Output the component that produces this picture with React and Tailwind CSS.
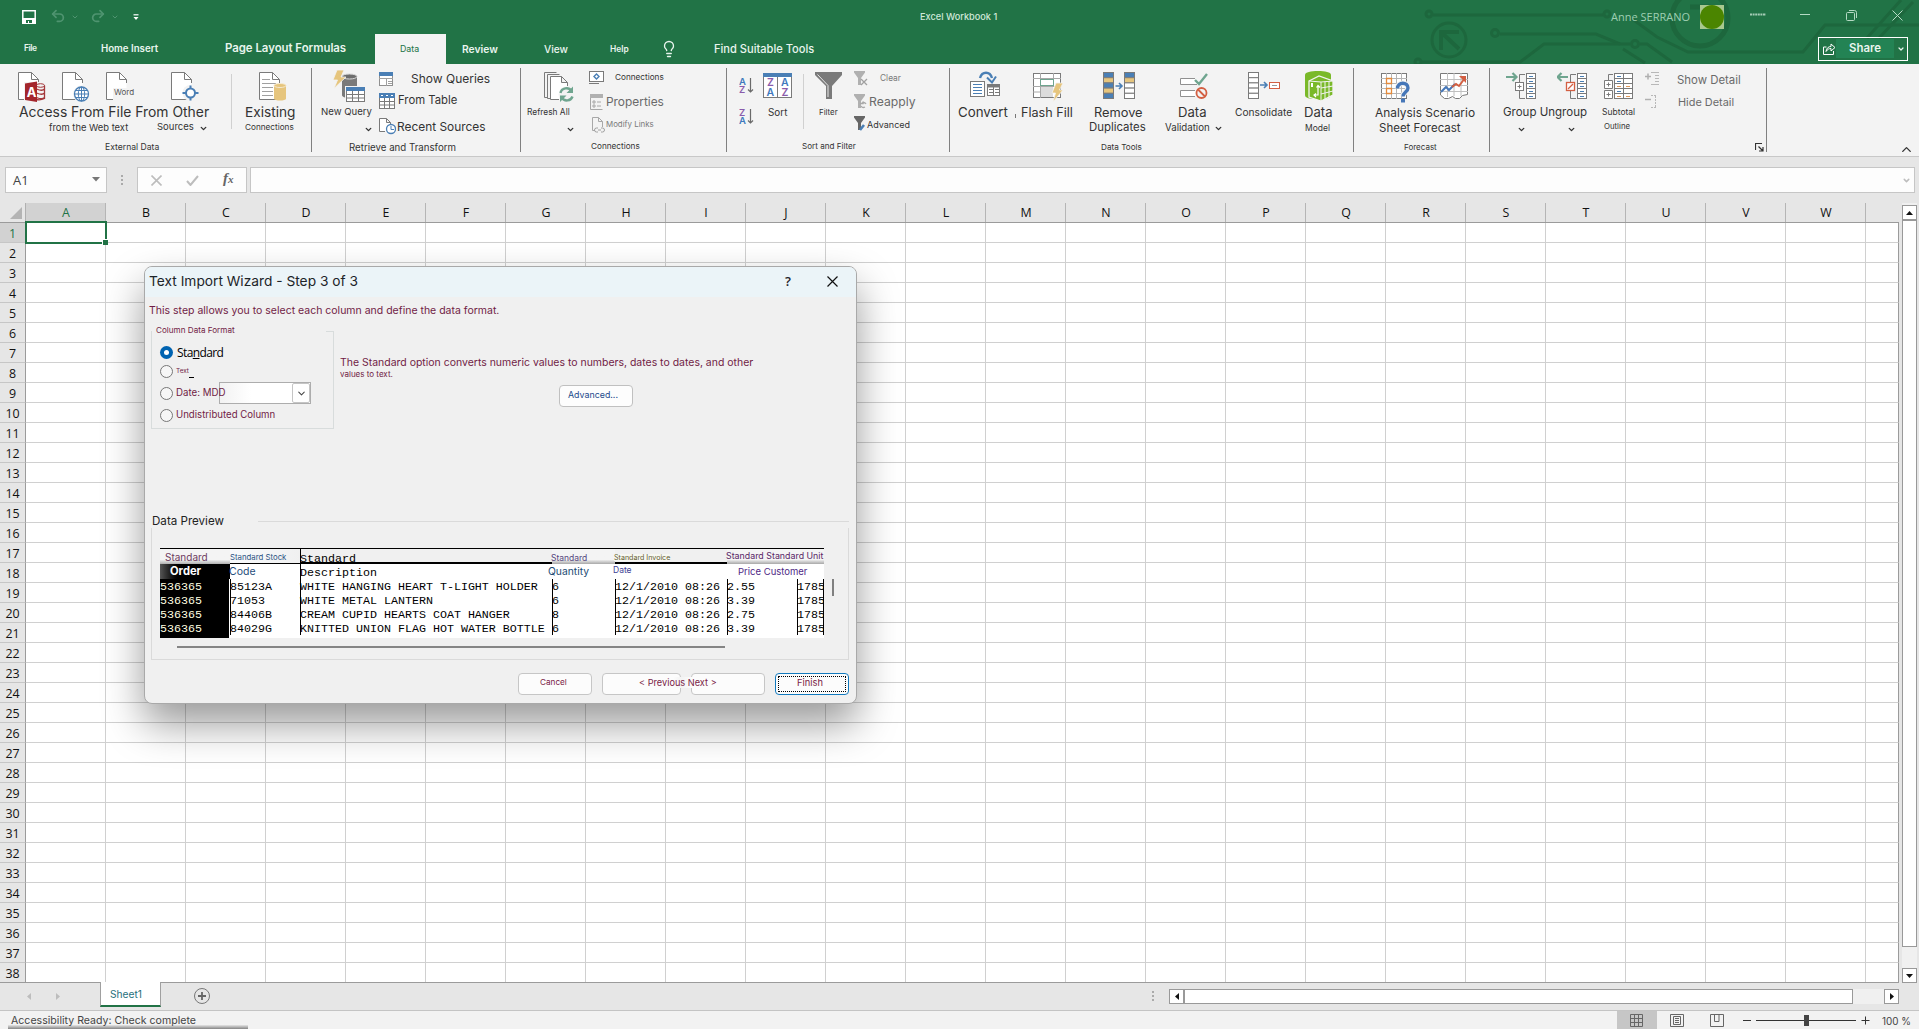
import { ChevronDown, ChevronUp, Lightbulb, Redo2, Undo2 } from 'lucide-react'

const COLUMNS = 'ABCDEFGHIJKLMNOPQRSTUVW'.split('')
const ROWS = Array.from({ length: 38 }, (_, i) => i + 1)

const GRAY = '#7a7a7a'
const BLUE = '#4a7fb5'
const YELLOW = '#e6c57d'
const RED = '#d35f42'
const GREEN = '#6fa58f'

function T({ className = '', children }) {
  return <span className={`shrink-0 whitespace-nowrap leading-none ${className}`}>{children}</span>
}

function Icon({ w, h, className = '', children }) {
  return (
    <svg width={w} height={h} viewBox={`0 0 ${w} ${h}`} fill="none" className={`shrink-0 ${className}`}>
      {children}
    </svg>
  )
}

function Doc({ children }) {
  return (
    <Icon w={30} h={32}>
      <path d="M21.5 8.5 14.5 1.5H1.5v27h20z" fill="#fff" />
      <path d="M18 28.5H1.5v-27h13l7 7V12M14.5 1.5v7h7" stroke={GRAY} />
      {children}
    </Icon>
  )
}

function AccessIcon() {
  return (
    <Doc>
      <rect x="7" y="11" width="22" height="19" fill="#f3f3f3" />
      <ellipse cx="23.500" cy="14.500" rx="4" ry="1.800" stroke="#a4373a" />
      <path d="M19.500 18q6 2.500 8 0M19.500 22q6 2.500 8 0M19.500 26.500q6 2.500 8 0M27.500 14.500v13q-4 2-8 1" stroke="#a4373a" strokeWidth="1.300" />
      <path d="M8 12.500 20 10.500v20.500L8 29z" fill="#a4262c" />
      <text x="9.800" y="25.500" fontSize="13" fontWeight="700" fontFamily="Inter, sans-serif" fill="#fff">A</text>
    </Doc>
  )
}

function WebIcon() {
  return (
    <Doc>
      <circle cx="20.500" cy="23" r="8.500" fill="#f3f3f3" />
      <circle cx="20.500" cy="23" r="7" stroke={BLUE} strokeWidth="1.300" fill="#fff" />
      <ellipse cx="20.500" cy="23" rx="3.200" ry="7" stroke={BLUE} />
      <path d="M20.500 16v14M13.500 23h14M14.500 19.500h12M14.500 26.500h12" stroke={BLUE} />
    </Doc>
  )
}

function OtherSourcesIcon() {
  return (
    <Doc>
      <circle cx="20.500" cy="22" r="8" fill="#f3f3f3" />
      <circle cx="20.500" cy="22" r="4.500" stroke={BLUE} strokeWidth="2" fill="#fff" />
      <path d="M20.500 14.500v3M20.500 26.500v3M12.500 22h3.500M25 22h3.500" stroke={BLUE} strokeWidth="2" />
    </Doc>
  )
}

function ExistingIcon() {
  return (
    <Doc>
      <path d="M4 8.500h8M4 12.500h14M4 16.500h11M4 20.500h11M4 24.500h11" stroke="#a0a0a0" />
      <path d="M16 14.500v13c0 1.500 3 2 6 2s6-.5 6-2v-13z" fill={YELLOW} />
      <ellipse cx="22" cy="14.500" rx="6" ry="2" fill={YELLOW} stroke="#f6ead0" />
    </Doc>
  )
}

function NewQueryIcon() {
  return (
    <Icon w={34} h={34}>
      <path d="M10 8v18c0 2 3 3 7.500 3S25 28 25 26V8z" fill={GRAY} />
      <ellipse cx="17.500" cy="7.500" rx="7.500" ry="2.500" fill="#6d6d6d" stroke="#d8d8d8" />
      <path d="M5 1h7L9 8h5L2 19.500 5.500 11H1z" fill={YELLOW} stroke="#f3f3f3" strokeWidth=".8" />
      <rect x="13" y="17" width="21" height="17" fill="#f3f3f3" />
      <rect x="14.500" y="18.500" width="18" height="14" fill="#fff" stroke={GRAY} />
      <path d="M14 18h19v4H14z" fill={BLUE} />
      <path d="M14 25.500h19M14 29h19M20.500 22v10M26.500 22v10" stroke={GRAY} />
    </Icon>
  )
}

function PaneIcon() {
  return (
    <Icon w={15} h={15}>
      <rect x=".5" y=".5" width="13" height="13" fill="#fff" stroke="#909090" />
      <path d="M0 0h14v4H0z" fill={BLUE} />
      <path d="M0 6.500h14M7.500 7v7M9 9.500h4M9 11.500h4" stroke="#a0a0a0" />
    </Icon>
  )
}

function TableIcon() {
  return (
    <Icon w={17} h={17}>
      <rect x=".5" y=".5" width="15" height="15" fill="#fff" stroke={GRAY} />
      <path d="M0 0h16v5H0z" fill={BLUE} />
      <path d="M2 2.500h2M7 2.500h2M12 2.500h2" stroke="#fff" />
      <path d="M0 8.500h16M0 12h16M5.500 5v11M10.500 5v11" stroke={GRAY} />
    </Icon>
  )
}

function RecentIcon() {
  return (
    <Icon w={17} h={17}>
      <path d="M6 13.500H.5V.5h7l4 4V6M7.500.5v4h4" stroke={GRAY} fill="#fff" />
      <circle cx="12" cy="11" r="4.500" fill="#fff" stroke={BLUE} strokeWidth="1.300" />
      <path d="M12 8v3.500h3" stroke={BLUE} />
    </Icon>
  )
}

function RefreshIcon() {
  return (
    <Icon w={31} h={32}>
      <path d="M4 26.500H1.500v-25h12M7 27.500H4.500v-24h12" stroke={GRAY} />
      <path d="M16 28.500H7.500v-23h11l6 6V15M18.500 5.500v6h6" stroke={GRAY} fill="#fff" />
      <circle cx="23.500" cy="23.500" r="8" fill="#f3f3f3" />
      <path d="M17.500 22c1-5 8-6.500 11-2M29.500 25.500c-1.500 4.500-8 5.500-11 1" stroke={GREEN} strokeWidth="2.400" />
      <path d="M30 15.500v6.500h-6.500zM17 31v-6.500h6.500z" fill={GREEN} />
    </Icon>
  )
}

function ConnectionsIcon() {
  return (
    <Icon w={16} h={14}>
      <rect x=".5" y=".5" width="14" height="10" fill="#fff" stroke={GRAY} />
      <path d="M0 12.500h10" stroke={GRAY} />
      <path d="m7.500 3 2.500 2.500L7.500 8 5 5.500z" stroke={BLUE} strokeWidth="1.400" />
    </Icon>
  )
}

function PropertiesIcon() {
  return (
    <Icon w={14} h={17}>
      <path d="M12.500 3V.5H.5v15h12" stroke="#a8a8a8" />
      <path d="M0 0h13v4H0z" fill="#b0b0b0" />
      <path d="M3 7h2v2H3zM3 11h2v2H3zM7 8h4M7 12h4" stroke="#a8a8a8" />
    </Icon>
  )
}

function ModifyLinksIcon() {
  return (
    <Icon w={13} h={17}>
      <path d="M3 13.500H.5V.5h6l4 4V10M6.500.5v4h4" stroke="#a8a8a8" />
      <path d="M6 11H4.500a1.500 1.500 0 0 0 0 4H6M9 11h1.500a1.500 1.500 0 0 1 0 4H9M6 13h3" stroke="#a0a0a0" />
    </Icon>
  )
}

function SortOrderIcon({ top, bottom, topColor, bottomColor }) {
  return (
    <Icon w={15} h={18}>
      <text x="0" y="8" fontSize="9.500" fontWeight="600" fontFamily="Inter, sans-serif" fill={topColor}>{top}</text>
      <text x="0" y="16" fontSize="9.500" fontWeight="600" fontFamily="Inter, sans-serif" fill={bottomColor}>{bottom}</text>
      <path d="M11.500 1v14M9 12.500l2.500 2.500 2.500-2.500" stroke="#6a6a6a" strokeWidth="1.200" />
    </Icon>
  )
}

function SortIcon() {
  return (
    <Icon w={30} h={26}>
      <rect x=".5" y=".5" width="28" height="24" fill="#fff" stroke={GRAY} />
      <path d="M0 0h29v4H0z" fill={BLUE} />
      <path d="M14.500 4v20" stroke={GRAY} />
      <g fontSize="10.500" fontWeight="600" fontFamily="Inter, sans-serif">
        <text x="4" y="13" fill="#8a5bab">Z</text>
        <text x="3.500" y="23" fill="#3f79bd">A</text>
        <text x="18" y="13" fill="#3f79bd">A</text>
        <text x="18.500" y="23" fill="#8a5bab">Z</text>
      </g>
    </Icon>
  )
}

function FilterIcon() {
  return (
    <Icon w={28} h={28}>
      <path d="M0 0h27v3L17 14v13h-6V14L0 3z" fill={GRAY} />
      <path d="M2.500 2.500 13 13.500V25" stroke="#e8e8e8" />
    </Icon>
  )
}

function SmallFilterIcon({ color, children }) {
  return (
    <Icon w={15} h={16}>
      <path d="M0 0h11v1.500L7 7v7H4V7L0 1.500z" fill={color} />
      {children}
    </Icon>
  )
}

function ConvertIcon() {
  return (
    <Icon w={31} h={28}>
      <path d="M10 7C12 0 20 0 22 7" stroke={BLUE} strokeWidth="2.400" />
      <path d="M17 6.500l5 5 4-6" stroke={BLUE} strokeWidth="2" />
      <rect x=".5" y="10.500" width="14" height="15" fill="#fff" stroke={GRAY} />
      <path d="M3 13.500h9M3 16.500h9M3 19.500h9M3 22.500h9" stroke={BLUE} />
      <rect x="17.500" y="13.500" width="12" height="11" fill="#fff" stroke={GRAY} />
      <path d="M17 13h13v3.500H17z" fill={GRAY} />
      <path d="M19 18.500h4M25 18.500h4M19 21.500h4M25 21.500h4M23.500 16v8" stroke={GRAY} />
    </Icon>
  )
}

function FlashFillIcon() {
  return (
    <Icon w={31} h={30}>
      <rect x=".5" y=".5" width="27" height="24" fill="#fff" stroke={GRAY} />
      <path d="M0 5.500h28M0 13.500h28M0 19h28M7.500 0v25M20.500 0v6" stroke="#a8a8a8" />
      <path d="M8 14h12v10H8z" fill="#dcdcdc" />
      <rect x="7.500" y="6.500" width="13" height="6" fill="#fff" stroke={GREEN} />
      <path d="M23 10h7l-3.500 7H30L20 29l2.500-9H19z" fill={YELLOW} stroke="#f3f3f3" strokeWidth=".8" />
    </Icon>
  )
}

function BandColumn({ x, bands }) {
  return bands.map((fill, i) => (
    <rect key={i} x={x + 0.5} y={0.5 + i * 5.2} width="10" height="5.200" fill={fill} stroke={GRAY} />
  ))
}

function RemoveDuplicatesIcon() {
  return (
    <Icon w={33} h={28}>
      <BandColumn x={0} bands={[BLUE, YELLOW, BLUE, YELLOW, BLUE]} />
      <path d="M12.500 14h6M16 11l3 3-3 3" stroke={BLUE} strokeWidth="1.600" />
      <BandColumn x={21} bands={[BLUE, YELLOW, '#fff', '#fff', '#fff']} />
    </Icon>
  )
}

function ValidationIcon() {
  return (
    <Icon w={28} h={27}>
      <path d="M15 5.500H.5v6H17M15 17.500H.5v6H15" stroke="#909090" fill="#fff" />
      <path d="m15 7 4 4L27 1" stroke={GREEN} strokeWidth="2.400" />
      <circle cx="21.500" cy="20" r="5" stroke={RED} strokeWidth="1.800" fill="#f3f3f3" />
      <path d="m18 16.500 7 7" stroke={RED} strokeWidth="1.800" />
    </Icon>
  )
}

function ConsolidateIcon() {
  return (
    <Icon w={33} h={28}>
      <BandColumn x={0} bands={['#fff', '#fff', '#fff', '#fff', '#fff']} />
      <path d="M12 13h6.500M16 10l3 3-3 3" stroke={BLUE} strokeWidth="1.600" />
      <rect x="21.500" y="10.500" width="10" height="6" fill="#fff" stroke={RED} />
      <path d="M24 13.500h5" stroke="#999" />
    </Icon>
  )
}

function DataModelIcon() {
  return (
    <Icon w={30} h={31}>
      <path d="M0 4C0 1 6 0 13 0s13 1 13 4v20c0 3-4 4-13 4S0 27 0 24z" fill="#7ab929" />
      <path d="m4 10 10-5 14 5v14l-12 6-12-4z" fill="#7ab929" stroke="#f3f3f3" strokeWidth="1.300" />
      <path d="M16 30V11L4 10M16 11l12-1M16 17l12-2M16 23l12-3M20 10.500V28M24 10v16" stroke="#f3f3f3" />
      <path d="M10 24h3v-9M11.500 16.500l1.500-2 2 2M11 22.500 9 24l2 2" stroke="#fff" strokeWidth="1.200" />
      <path d="M7 12v4" stroke="#fff" strokeWidth="2" />
    </Icon>
  )
}

function WhatIfIcon() {
  return (
    <Icon w={30} h={31}>
      <rect x=".5" y=".5" width="25" height="25" fill="#fff" stroke={GRAY} />
      <path d="M0 5.500h26M0 10.500h26M0 15.500h26M0 20.500h26M5.500 0v26M10.500 0v26M15.500 0v26M20.500 0v26" stroke="#b5b5b5" />
      <path d="M5.500 5.500h5v5h-5zM5.500 15.500h5v5h-5z" fill="#fff" stroke="#e58a3a" strokeWidth="1.300" />
      {/* question mark: light outline under a thick blue hook and dot */}
      <path d="M16.500 15.500c0-7 10.500-7 10.500-.5 0 4-5 4-5 8.500" stroke="#f3f3f3" strokeWidth="5.500" />
      <path d="M16.500 15.500c0-7 10.500-7 10.500-.5 0 4-5 4-5 8.500" stroke="#4677b8" strokeWidth="3.400" />
      <path d="M20 25.500h4v4h-4z" fill="#4677b8" />
    </Icon>
  )
}

function ForecastIcon() {
  return (
    <Icon w={29} h={27}>
      <path d="M.5.5h27v21l-5 1-3 3h-4l-3-2-4 2h-4L.5 22z" fill="#fff" stroke={GRAY} />
      <path d="M0 6.500h28M0 12.500h28M0 18.500h28M7.500 0v24M14 0v23M21 0v23" stroke="#c0c0c0" />
      <path d="m1 19 5-5 3 3 6-6" stroke="#4677b8" strokeWidth="2" />
      <path d="m12 14 4-3 3 2 6-8" stroke={RED} strokeWidth="2" />
      <path d="M19 3h7v7z" fill={RED} />
    </Icon>
  )
}

function OutlineList({ x }) {
  return (
    <>
      <rect x={x + 0.5} y="1.500" width="9" height="25" fill="#fff" stroke={GRAY} />
      {[4, 9, 14, 19, 24].map((y) => (
        <path key={y} d={`M${x + 3} ${y + 0.5}h4`} stroke={BLUE} />
      ))}
      {[6, 11, 16, 21].map((y) => (
        <path key={y} d={`M${x} ${y + 0.5}h10`} stroke={GRAY} />
      ))}
    </>
  )
}

function GroupIcon() {
  return (
    <Icon w={31} h={28}>
      <path d="M0 5h9M6.500 1l4 4-4 4" stroke={GREEN} strokeWidth="2.200" />
      <path d="M19 2.500h-5.500V10M13.500 19v7.500H19" stroke={GRAY} />
      <rect x="9.500" y="10.500" width="8" height="8" fill="#fff" stroke={GRAY} />
      <path d="M11.500 14.500h4M13.500 12.500v4" stroke={GRAY} />
      <OutlineList x={20} />
    </Icon>
  )
}

function UngroupIcon() {
  return (
    <Icon w={31} h={28}>
      <path d="M11 5H2M4.500 1l-4 4 4 4" stroke={GREEN} strokeWidth="2.200" />
      <path d="M19 2.500h-5.500V10M13.500 19v7.500H19" stroke={GRAY} />
      <rect x="9.500" y="10.500" width="8" height="8" fill="#fff" stroke={RED} strokeWidth="1.300" />
      <path d="m11 17 5-5" stroke={RED} strokeWidth="1.300" />
      <OutlineList x={20} />
    </Icon>
  )
}

function SubtotalIcon() {
  return (
    <Icon w={30} h={28}>
      <path d="M9 2.500H4.500V8" stroke={GRAY} />
      <path d="M.5 8.500h8v8h-8zM.5 18.500h8v8h-8z" fill="#fff" stroke={GRAY} />
      <path d="M2.500 12.500h4M4.500 10.500v4M2.500 22.500h4M4.500 20.500v4" stroke={GRAY} />
      <rect x="10.500" y="1.500" width="18" height="25" fill="#fff" stroke={GRAY} />
      <path d="M10 6.500h19M10 11.500h19M10 16.500h19M10 21.500h19M19.500 1v26" stroke={GRAY} />
      <path d="M13 4.500h4M13 9.500h4M13 19.500h4" stroke={BLUE} />
      <path d="M13 14.500h4M22 14.500h4M13 24.500h4M22 24.500h4" stroke="#e0975a" />
    </Icon>
  )
}

function DetailIcon({ plus }) {
  return (
    <Icon w={15} h={14}>
      <path d={plus ? 'M0 4.500h6M3 1.500v6' : 'M0 4.500h6'} stroke="#b0b0b0" strokeWidth="1.500" />
      {plus ? (
        <path d="M6 .5h8M10 3.500h4M10 6.500h4M10 9.500h4M6 12.500h8" stroke="#b8b8b8" />
      ) : (
        <path d="M6 .5h5M10.500 1v12M6 12.500h5" stroke="#b8b8b8" strokeDasharray="2 1" />
      )}
    </Icon>
  )
}

function Caret({ className = '' }) {
  return <ChevronDown size={9} strokeWidth={3.600} className={`shrink-0 text-[#333] ${className}`} />
}

function Circuit() {
  return (
    <svg width="520" height="64" viewBox="0 0 520 64" fill="none" className="absolute right-0 top-0" stroke="#1d673d" strokeWidth="3">
      <circle cx="30" cy="14" r="3" />
      <path d="M34 15h170" />
      <circle cx="208" cy="14" r="3" />
      <circle cx="50" cy="40" r="17" />
      <path d="M42 50V32h18M43 33l17 16" strokeWidth="4" />
      <circle cx="96" cy="33" r="3.500" />
      <path d="M101 34h96l24 10" />
      <circle cx="19" cy="62" r="3" />
      <path d="M23 62h98l24-18h86M241 44h7l25 18" />
      <circle cx="236" cy="44" r="3.500" />
      <path d="m224 49 22 14M232 18l26 19 31 15h115l22-27h94" />
      <circle cx="301" cy="18" r="28" strokeWidth="5" />
      <path d="M291 7h18v4" strokeWidth="5" />
      <path d="m468 38 34-38M480 38 514 2" />
    </svg>
  )
}

function TitleBar() {
  return (
    <header className="relative h-16 bg-[#217346] text-white">
      <Circuit />
      <div className="relative flex h-[34px] items-start">
        <Icon w={15} h={15} className="ml-[22px] mt-[10px]">
          <path d="M.8.8h12.400v12.400H.8z" stroke="#fff" strokeWidth="1.500" />
          <path d="M0 8h14v6H0z" fill="#fff" />
          <path d="M4 10h6v3H7v-2H6v2H4z" fill="#217346" />
        </Icon>
        <Undo2 size={16} strokeWidth={2.600} className="ml-[13px] mt-[8px] text-[#4f9470]" />
        <ChevronDown size={8} strokeWidth={3} className="ml-[5px] mt-[13px] text-[#4f9470]" />
        <Redo2 size={16} strokeWidth={2.600} className="ml-[11px] mt-[8px] text-[#4f9470]" />
        <ChevronDown size={8} strokeWidth={3} className="ml-[5px] mt-[13px] text-[#4f9470]" />
        <Icon w={7} h={7} className="ml-[14px] mt-[14px]">
          <path d="M.5.8h5" stroke="#fff" strokeWidth="1.200" />
          <path d="M.5 3h5L3 6z" fill="#fff" />
        </Icon>
        <T className="ml-[780px] mt-[12px] w-[77px] text-[9.2px] font-medium text-[#cfe8d9]">Excel Workbook 1</T>
        <T className="ml-[614px] mt-[11px] w-[79px] font-['Open_Sans'] text-[11px] text-[#9ecfb2]">Anne SERRANO</T>
        <span className="ml-[10px] mt-[5px] size-6 shrink-0 bg-[#a9c88f]">
          <span className="block size-6 rounded-full bg-[#4b8500]" />
        </span>
        <Icon w={16} h={4} className="ml-[26px] mt-[13px]">
          <path d="M0 1.500h16" stroke="#a5ccb5" strokeWidth="2" strokeDasharray="2 .6" />
        </Icon>
        <Icon w={10} h={2} className="ml-[34px] mt-[14px]">
          <path d="M0 .5h10" stroke="#b5dac4" />
        </Icon>
        <Icon w={11} h={11} className="ml-[36px] mt-[10px]">
          <path d="M.5 3.500q0-1 1-1h6q1 0 1 1v6q0 1-1 1h-6q-1 0-1-1zM3 .5h5.500q2 0 2 2V8" stroke="#b5dac4" />
        </Icon>
        <Icon w={11} h={11} className="ml-[35px] mt-[10px]">
          <path d="m.5.5 10 10M10.500.5l-10 10" stroke="#b5dac4" />
        </Icon>
      </div>
      <nav className="relative flex h-[30px] items-center font-semibold text-[#e9f5ee]">
        <T className="-mt-px ml-6 w-[13px] text-[8.5px] tracking-[-0.5px]">File</T>
        <T className="-mt-px ml-16 w-[57px] text-[9.7px]">Home Insert</T>
        <T className="ml-[67px] w-[122px] text-[11.4px] tracking-[-0.02px]">Page Layout Formulas</T>
        <div className="ml-[28px] flex h-[30px] w-[71px] items-center bg-[#f3f3f3] pl-[25px]">
          <T className="text-[8.8px] font-normal text-[#217346]">Data</T>
        </div>
        <T className="ml-[16px] w-[36px] text-[10.3px]">Review</T>
        <T className="ml-[46px] w-6 text-[10.2px] font-medium">View</T>
        <T className="ml-[42px] w-[19px] text-[8.4px]">Help</T>
        <Lightbulb size={18} strokeWidth={1.800} className="ml-[31px] -mt-px" />
        <T className="ml-[36px] mt-[2px] w-[102px] text-[11.1px] font-medium">Find Suitable Tools</T>
        <div className="ml-[1002px] flex h-6 w-[90px] items-center border border-white">
          <Icon w={13} h={12} className="ml-[4px]">
            <path d="M3.500 4H.5v7.500h10V8M3 8.500C3.500 5 5.500 3.500 8 3.500V1l4 3.500L8 8V5.500c-2 0-3.500.8-5 3z" stroke="#fff" />
          </Icon>
          <span className="flex h-[19px] w-[58px] items-center bg-[#238354] pl-[13px] -mt-px">
            <T className="text-[11.4px]">Share</T>
          </span>
          <ChevronDown size={8} strokeWidth={3.600} className="ml-[3px]" />
        </div>
      </nav>
    </header>
  )
}

function Divider() {
  return <div className="mt-[6px] h-[55px] w-px shrink-0 bg-[#d0d0d0]" />
}

function Ribbon() {
  return (
    <section className="flex h-[93px] border-b border-[#c8c8c8] bg-[#f3f3f3] pt-1 text-[#333]">
      {/* External data */}
      <div className="flex h-[84px] w-[312px] shrink-0 border-r border-[#808080]">
        <div className="flex w-[231px] shrink-0 flex-col *:shrink-0">
          <div className="flex h-9 items-start pt-[3px] pl-[17px]">
            <AccessIcon />
            <span className="w-[14px]" />
            <WebIcon />
            <span className="w-[14px]" />
            <div className="flex items-end">
              <Doc>
                <path d="M8 17h22v15H8z" fill="#f3f3f3" />
              </Doc>
              <T className="-ml-[21px] mb-[7px] w-[20px] text-[8px] text-[#555]">Word</T>
            </div>
            <span className="w-[36px]" />
            <OtherSourcesIcon />
          </div>
          <div className="flex h-4 items-center pl-[19px] pt-px">
            <T className="text-[13.9px]">Access From File From Other</T>
          </div>
          <div className="flex h-[15px] items-center">
            <T className="ml-[49px] w-[81px] text-[9.4px]">from the Web text</T>
            <T className="-mt-px ml-[27px] w-[38px] text-[9.5px]">Sources</T>
            <Caret className="ml-[4px] mt-px" />
          </div>
          <div className="mt-1 flex h-4 items-center pl-[105px]">
            <T className="text-[8.6px]">External Data</T>
          </div>
        </div>
        <Divider />
        <div className="flex flex-col pl-[13px]">
          <div className="flex h-9 items-start pt-[3px] pl-[13px]"><ExistingIcon /></div>
          <div className="flex h-4 items-center pt-px"><T className="text-[13.7px]">Existing</T></div>
          <div className="flex h-[15px] items-center"><T className="text-[8.2px]">Connections</T></div>
        </div>
      </div>

      {/* Retrieve and transform */}
      <div className="flex h-[84px] w-[209px] shrink-0 flex-col border-r border-[#808080] *:shrink-0">
        <div className="flex h-[71px]">
          <div className="w-[67px] shrink-0 pl-[9px]">
            <div className="flex h-9 items-start pt-px pl-[11px]"><NewQueryIcon /></div>
            <div className="flex h-4 items-center"><T className="text-[9.6px]">New Query</T></div>
            <div className="flex h-[15px] items-center pl-[43px]"><Caret className="mt-[3px]" /></div>
          </div>
          <div className="flex flex-col">
            <div className="flex h-[22px] items-center"><PaneIcon /><T className="ml-[17px] text-[12px]">Show Queries</T></div>
            <div className="flex h-[22px] items-center"><TableIcon /><T className="ml-[2px] text-[11.3px]">From Table</T></div>
            <div className="mt-[2px] flex h-[24px] items-center"><RecentIcon /><T className="ml-px mt-px text-[11.9px]">Recent Sources</T></div>
          </div>
        </div>
        <div className="flex h-4 items-center pl-[37px] pt-px"><T className="text-[9.7px]">Retrieve and Transform</T></div>
      </div>

      {/* Connections */}
      <div className="flex h-[84px] w-[206px] shrink-0 flex-col border-r border-[#808080] *:shrink-0">
        <div className="flex h-[71px]">
          <div className="w-[68px] shrink-0 pl-[6px]">
            <div className="flex h-9 items-start pt-[3px] pl-[16px]"><RefreshIcon /></div>
            <div className="flex h-4 items-center"><T className="text-[8.4px]">Refresh All</T></div>
            <div className="flex h-[15px] items-center pl-[39px]"><Caret className="mt-[3px]" /></div>
          </div>
          <div className="flex flex-col">
            <div className="flex h-[19px] items-center"><ConnectionsIcon /><T className="ml-[10px] text-[8.2px]">Connections</T></div>
            <div className="mt-[4px] flex h-[22px] items-center pl-px text-[#6a6a6a]"><PropertiesIcon /><T className="ml-[2px] text-[11.9px]">Properties</T></div>
            <div className="mt-px flex h-[22px] items-center pl-[3px] text-[#7a7a7a]"><ModifyLinksIcon /><T className="ml-[1px] text-[7.9px]">Modify Links</T></div>
          </div>
        </div>
        <div className="flex h-[15px] items-center pl-[70px]"><T className="text-[8.2px]">Connections</T></div>
      </div>

      {/* Sort and filter */}
      <div className="flex h-[84px] w-[223px] shrink-0 flex-col border-r border-[#808080] *:shrink-0">
        <div className="flex h-[71px]">
          <div className="flex w-[36px] shrink-0 flex-col pl-[12px] pt-[9px]">
            <SortOrderIcon top="A" bottom="Z" topColor="#3f79bd" bottomColor="#8a5bab" />
            <span className="h-[13px]" />
            <SortOrderIcon top="Z" bottom="A" topColor="#8a5bab" bottomColor="#3f79bd" />
          </div>
          <div className="w-[40px] shrink-0">
            <div className="flex h-9 items-start pt-[5px]"><SortIcon /></div>
            <div className="flex h-[18px] items-center pl-[5px]"><T className="text-[9.9px]">Sort</T></div>
          </div>
          <Divider />
          <div className="w-[50px] shrink-0 pl-[11px]">
            <div className="flex h-9 items-start pt-[4px]"><FilterIcon /></div>
            <div className="flex h-[18px] items-center pl-[4px]"><T className="text-[7.9px]">Filter</T></div>
          </div>
          <div className="flex flex-col">
            <div className="flex h-[21px] items-center text-[#7a7a7a]">
              <SmallFilterIcon color="#b0b0b0"><path d="m7 8 6 6M13 8l-6 6" stroke="#a0a0a0" strokeWidth="1.300" /></SmallFilterIcon>
              <T className="ml-[11px] text-[8.4px]">Clear</T>
            </div>
            <div className="mt-[2px] flex h-[22px] items-center text-[#6a6a6a]">
              <SmallFilterIcon color="#b0b0b0"><path d="M6 9.500h3v-2M12 10a3 3 0 0 0-4-1M7 12a3 3 0 0 0 4 1" stroke="#a8a8a8" strokeWidth="1.300" /></SmallFilterIcon>
              <T className="text-[12.2px]">Reapply</T>
            </div>
            <div className="flex h-[22px] items-center">
              <SmallFilterIcon color="#666"><path d="m6 14 4-5" stroke={BLUE} strokeWidth="2.600" /></SmallFilterIcon>
              <T className="-ml-[2px] text-[9px]">Advanced</T>
            </div>
          </div>
        </div>
        <div className="flex h-[15px] items-center pl-[75px]"><T className="text-[8.1px]">Sort and Filter</T></div>
      </div>

      {/* Data tools */}
      <div className="flex h-[84px] w-[404px] shrink-0 flex-col border-r border-[#808080] *:shrink-0">
        <div className="flex h-9 items-start pl-[20px]">
          <span className="pt-[3px]"><ConvertIcon /></span>
          <span className="ml-[32px] pt-[5px]"><FlashFillIcon /></span>
          <span className="ml-[39px] pt-[4px]"><RemoveDuplicatesIcon /></span>
          <span className="ml-[44px] pt-[5px]"><ValidationIcon /></span>
          <span className="ml-[40px] pt-[4px]"><ConsolidateIcon /></span>
          <span className="ml-[24px] pt-[3px]"><DataModelIcon /></span>
        </div>
        <div className="flex h-[17px] items-center pl-[8px] pt-px">
          <T className="w-[51px] text-[13.3px]">Convert</T>
          <span className="ml-[6px] mt-[5px] h-[4px] w-px bg-[#777]" />
          <T className="ml-[5px] w-[52px] text-[12.6px]">Flash Fill</T>
          <T className="ml-[21px] w-[49px] text-[12.8px]">Remove</T>
          <T className="ml-[35px] w-[29px] text-[13.1px]">Data</T>
          <T className="-mt-px ml-[28px] w-[58px] text-[10.2px]">Consolidate</T>
          <T className="ml-[11px] w-[29px] text-[13.1px]">Data</T>
        </div>
        <div className="flex h-[14px] items-center pl-[139px]">
          <T className="w-[58px] text-[11.4px]">Duplicates</T>
          <T className="ml-[18px] w-[46px] text-[9.7px]">Validation</T>
          <Caret className="ml-[3px]" />
          <T className="ml-[82px] text-[8.5px]">Model</T>
        </div>
        <div className="mt-1 flex h-4 items-center pl-[151px]"><T className="text-[8.2px]">Data Tools</T></div>
      </div>

      {/* Forecast */}
      <div className="flex h-[84px] w-[136px] shrink-0 flex-col border-r border-[#808080] *:shrink-0">
        <div className="flex h-9 items-start gap-[29px] pl-[27px] pt-[5px]"><WhatIfIcon /><ForecastIcon /></div>
        <div className="flex h-4 items-center pl-[21px] pt-px"><T className="text-[11.9px]">Analysis Scenario</T></div>
        <div className="flex h-[18px] items-center pl-[25px]"><T className="text-[11.5px]">Sheet Forecast</T></div>
        <div className="flex h-[17px] items-center pl-[50px]"><T className="text-[8px]">Forecast</T></div>
      </div>

      {/* Outline */}
      <div className="flex h-[84px] w-[277px] shrink-0 border-r border-[#808080]">
        <div className="w-[155px] shrink-0">
          <div className="flex h-9 items-start pl-[16px] pt-[4px]">
            <GroupIcon />
            <span className="w-5" />
            <UngroupIcon />
            <span className="w-[16px]" />
            <SubtotalIcon />
          </div>
          <div className="flex h-4 items-center pl-[13px]">
            <T className="mt-px w-[85px] text-[11.5px]">Group Ungroup</T>
            <T className="ml-[14px] text-[8.5px]">Subtotal</T>
          </div>
          <div className="flex h-[14px] items-center pl-[27px]">
            <Caret className="mt-[4px]" />
            <Caret className="ml-[41px] mt-[4px]" />
            <T className="ml-[28px] text-[7.8px]">Outline</T>
          </div>
        </div>
        <div className="flex w-[120px] shrink-0 flex-col text-[#6a6a6a]">
          <div className="flex h-[23px] items-center"><DetailIcon plus /><T className="ml-[17px] mt-[3px] text-[11.4px]">Show Detail</T></div>
          <div className="flex h-[23px] items-center"><DetailIcon /><T className="ml-[18px] mt-[2px] text-[10.9px]">Hide Detail</T></div>
          <Icon w={9} h={9} className="ml-[110px] mt-[30px]">
            <path d="M.5 7V.5H7M3.500 3.500l4 4M8 4v4H4" stroke="#333" strokeWidth="1.200" />
          </Icon>
        </div>
      </div>
      <ChevronUp size={15} strokeWidth={2.200} className="ml-auto mr-[5px] mt-[74px]" />
    </section>
  )
}

function FormulaBar() {
  return (
    <section className="flex h-[46px] items-start bg-[#e6e6e6] pt-[10px] text-[#444]">
      <div className="ml-[5px] flex h-[26px] w-[102px] items-center justify-between border border-[#c6c6c6] bg-[#fdfdfd] pl-[7px] pr-[6px]">
        <T className="font-['Open_Sans'] text-[12.9px]">A1</T>
        <Icon w={8} h={5} className="-mt-[2px]"><path d="M0 0h8L4 4.500z" fill="#777" /></Icon>
      </div>
      <div className="ml-[14px] mt-[8px] flex w-[3px] flex-col gap-[2px]">
        <span className="size-[2px] bg-[#aaa]" />
        <span className="size-[2px] bg-[#aaa]" />
        <span className="size-[2px] bg-[#aaa]" />
      </div>
      <div className="ml-[13px] flex h-[26px] w-[110px] items-center border border-[#c6c6c6] bg-[#fdfdfd] pl-[13px]">
        <Icon w={11} h={11}><path d="m.5.5 10 10M10.500.5l-10 10" stroke="#bdbdbd" strokeWidth="1.600" /></Icon>
        <Icon w={13} h={11} className="ml-[24px]"><path d="m1 6 3.500 4L12 1" stroke="#bdbdbd" strokeWidth="2" /></Icon>
        <T className="-mt-[3px] ml-[24px] font-['Liberation_Serif'] text-[15px] font-bold italic text-[#666]">f<span className="text-[11px]">x</span></T>
      </div>
      <div className="ml-[3px] flex h-[26px] w-[1665px] items-center justify-end border border-[#c6c6c6] bg-[#fdfdfd] pr-[3px]">
        <ChevronDown size={9} strokeWidth={4} className="text-[#bdbdbd]" />
      </div>
    </section>
  )
}

function Selection() {
  return (
    <div className="absolute -left-px -top-[2px] z-10 h-[23px] w-[82px] border-2 border-[#217346]">
      <span className="absolute -bottom-[3px] -right-[3px] size-[6px] border-l border-t border-white bg-[#217346]" />
    </div>
  )
}

function Grid() {
  return (
    <div className="w-[1899px] font-['Open_Sans'] text-[12.4px] text-[#111]">
      <div className="flex h-5 border-b border-[#9b9b9b] bg-[#e6e6e6]">
        <div className="flex w-[26px] items-end justify-end border-r border-[#b0b0b0] pb-[3px] pr-[3px]">
          <Icon w={12} h={12}><path d="M12 0v12H0z" fill="#b4b4b4" /></Icon>
        </div>
        {COLUMNS.map((c) => (
          <div
            key={c}
            className={`flex w-20 items-center justify-center border-r border-[#b5b5b5] pl-px pt-px leading-none ${
              c === 'A' ? 'bg-[#d2d2d2] text-[#217346]' : ''
            }`}
          >
            {c}
          </div>
        ))}
      </div>
      {ROWS.map((r) => (
        <div key={r} className={`flex h-5 ${r === 38 ? 'border-b border-[#9b9b9b]' : ''}`}>
          <div
            className={`flex w-[26px] items-center justify-center border-r border-[#9b9b9b] pt-[3px] leading-none ${
              r === 38 ? '' : 'border-b border-b-[#c6c6c6]'
            } ${r === 1 ? 'bg-[#d2d2d2] text-[#217346]' : 'bg-[#e6e6e6]'}`}
          >
            {r}
          </div>
          {COLUMNS.map((c) => (
            <div key={c} className={`relative w-20 border-r border-[#d0d0d0] bg-white ${r === 38 ? '' : 'border-b'}`}>
              {r === 1 && c === 'A' && <Selection />}
            </div>
          ))}
          <div className={`w-[33px] border-r border-[#d0d0d0] border-r-[#9b9b9b] bg-white ${r === 38 ? '' : 'border-b'}`} />
        </div>
      ))}
    </div>
  )
}

function VerticalScroll() {
  return (
    <div className="ml-[3px] flex w-[15px] flex-col bg-[#f0f0f0]">
      <div className="mt-[2px] flex h-[15px] items-center justify-center border border-[#999] bg-white">
        <Icon w={7} h={4}><path d="M0 4h7L3.500 0z" fill="#111" /></Icon>
      </div>
      <div className="h-[727px] border border-[#999] bg-white" />
      <div className="mt-auto flex h-[15px] items-center justify-center border border-[#999] bg-white">
        <Icon w={7} h={4}><path d="M0 0h7L3.500 4z" fill="#111" /></Icon>
      </div>
    </div>
  )
}

function Radio({ checked }) {
  return checked ? (
    <span className="flex size-[13px] shrink-0 items-center justify-center rounded-full bg-[#0063b1]">
      <span className="size-[5px] rounded-full bg-white" />
    </span>
  ) : (
    <span className="size-[13px] shrink-0 rounded-full border border-[#777] bg-[#f6f6f6]" />
  )
}

const PREVIEW = [
  ['536365', '85123A', 'WHITE HANGING HEART T-LIGHT HOLDER', '6', '12/1/2010 08:26', '2.55', '1785'],
  ['536365', '71053', 'WHITE METAL LANTERN', '6', '12/1/2010 08:26', '3.39', '1785'],
  ['536365', '84406B', 'CREAM CUPID HEARTS COAT HANGER', '8', '12/1/2010 08:26', '2.75', '1785'],
  ['536365', '84029G', 'KNITTED UNION FLAG HOT WATER BOTTLE', '6', '12/1/2010 08:26', '3.39', '1785'],
]

function Preview() {
  return (
    <div className="w-[664px] overflow-hidden bg-white font-['Liberation_Mono'] text-[11.67px] text-black">
      <div className="grid h-[16px] grid-cols-[70px_70px_252px_63px_112px_70px_27px] grid-rows-[13px] border-b-2 border-t border-black bg-[#f0f0f0]">
        <div className="flex h-[15px] items-start bg-linear-to-b from-[#f4f4f4] from-70% to-[#b0b0b0] pl-[5px] pt-[3px]">
          <T className="font-[Inter] text-[10px] text-[#6d3b5f]">Standard</T>
        </div>
        <div className="flex h-[14px] items-start bg-linear-to-r from-[#f8fafc] to-[#f0f0f0] pt-[5px]">
          <T className="font-[Inter] text-[7.8px] text-[#2d5484]">Standard Stock</T>
        </div>
        <div className="flex items-start border-l border-black pt-[5px]"><T className="-ml-px">Standard</T></div>
        <div className="flex h-[15px] items-start bg-linear-to-b from-[#f4f4f4] from-70% to-[#a8a8a8] pt-[5px]">
          <T className="-ml-px font-[Inter] text-[8.5px] text-[#55477f]">Standard</T>
        </div>
        <div className="flex items-start pt-[5px]">
          <T className="-ml-px bg-[#f7f7f2] font-[Inter] text-[7.1px] text-[#5f5b2c]">Standard Invoice</T>
        </div>
        <div className="col-span-2 flex h-[15px] items-start bg-linear-to-b from-[#f4f4f4] from-70% to-[#a8a8a8] pt-[3px]">
          <T className="-ml-px font-[Inter] text-[8.85px] text-[#5a2767]">Standard Standard Unit</T>
        </div>
      </div>
      <div className="grid h-[15px] grid-cols-[70px_70px_252px_63px_112px_97px] grid-rows-[15px] items-center">
        <div className="flex h-full items-center bg-linear-to-r from-[#555] to-black to-30% pl-[10px]">
          <T className="font-[Inter] text-[11.2px] font-bold text-white">Order</T>
        </div>
        <T className="-ml-px mt-px font-[Inter] text-[10.5px] text-[#1f4d7a]">Code</T>
        <div className="flex h-full items-center border-l border-black pt-[4px]"><T className="-ml-px">Description</T></div>
        <T className="-ml-[4px] -mt-px font-[Inter] text-[10.3px] text-[#1b4a73]">Quantity</T>
        <T className="-ml-[2px] -mt-[2px] font-[Inter] text-[8.5px] text-[#3f3f95]">Date</T>
        <T className="ml-[11px] font-[Inter] text-[9.5px] text-[#4f2a86]">Price Customer</T>
      </div>
      {PREVIEW.map((row, i) => (
        <div key={i} className="grid h-[14px] grid-cols-[70px_70px_252px_63px_112px_70px_27px]">
          {row.map((cell, j) => (
            <div
              key={j}
              className={`flex h-[14px] items-center pt-[3px] leading-none ${
                j === 0 ? 'border-r border-white bg-black text-[#ffffe0]' : 'border-l border-black'
              } ${j === 6 ? 'overflow-hidden border-r' : ''}`}
            >
              <T className={j === 0 ? '' : '-ml-px'}>{cell}</T>
            </div>
          ))}
        </div>
      ))}
      <div className="grid h-[3px] grid-cols-[69px_1fr]"><span className="bg-black" /></div>
    </div>
  )
}

function Wizard() {
  return (
    <div className="absolute left-[144px] top-[266px] flex h-[438px] w-[713px] flex-col overflow-hidden rounded-lg border border-[#a9a9a9] bg-[#f0f0f0] text-[#701c45] shadow-[0_20px_40px_rgba(0,0,0,0.4)]">
      <div className="flex h-[30px] items-center bg-[#ebf4f8] text-[#1d2429]">
        <T className="-mt-px ml-[4px] w-[210px] text-[13.75px]">Text Import Wizard - Step 3 of 3</T>
        <T className="-mt-0.5 ml-[426px] w-[8px] font-['Open_Sans'] text-[13px] font-semibold">?</T>
        <Icon w={11} h={11} className="ml-[34px] -mt-0.5"><path d="m.5.5 10 10M10.500.5l-10 10" stroke="#111" strokeWidth="1.200" /></Icon>
      </div>
      <div className="flex h-[27px] items-center pl-[4px] pt-[2px]">
        <T className="text-[10.5px]">This step allows you to select each column and define the data format.</T>
      </div>

      <div className="flex h-[188px] items-start pl-[6px]">
        <div className="mt-[7px] h-[98px] w-[183px] shrink-0 border border-t-0 border-[#d8dcdc]">
          <div className="-mt-[7px] flex h-[13px] items-center">
            <T className="ml-[4px] text-[8.15px]">Column Data Format</T>
            <span className="ml-auto mt-px h-px w-[7px] bg-[#d8dcdc]" />
          </div>
          <div className="mt-[5px] flex h-5 items-center pl-[8px]">
            <Radio checked />
            <T className="ml-[4px] mt-px font-['Open_Sans'] text-[12px] tracking-[-0.6px] text-black">Sta<u>n</u>dard</T>
          </div>
          <div className="flex h-[19px] items-center pl-[8px]">
            <Radio />
            <T className="ml-[3px] text-[6.4px]">Text</T>
            <span className="mt-[11px] h-px w-[5px] bg-black" />
          </div>
          <div className="mt-px flex h-[22px] items-center pl-[8px]">
            <Radio />
            <T className="relative z-10 ml-[3px] w-[50px] text-[9.7px]">Date: MDD</T>
            <div className="-ml-[7px] flex h-[22px] w-[92px] justify-end border border-[#adadad] bg-linear-to-r from-[#f2f2f2] to-white to-35%">
              <span className="flex w-[18px] items-center justify-center rounded-[2px] border border-[#c5c5c5] bg-white">
                <ChevronDown size={11} strokeWidth={2.200} className="text-[#444]" />
              </span>
            </div>
          </div>
          <div className="flex h-[22px] items-center pl-[8px]">
            <Radio />
            <T className="ml-[3px] text-[9.65px]">Undistributed Column</T>
          </div>
        </div>
        <div className="flex flex-col pl-[6px] pt-[34px]">
          <T className="h-[12px] text-[10.48px]">The Standard option converts numeric values to numbers, dates to dates, and other</T>
          <T className="text-[8px]">values to text.</T>
          <div className="ml-[219px] mt-[7px] flex h-[22px] w-[74px] items-center rounded border border-[#c0c0c0] bg-[#fdfdfd] pb-px pl-[8px]">
            <T className="text-[8.85px] text-[#1c4a8c]">Advanced...</T>
          </div>
        </div>
      </div>

      <div className="flex h-[16px] items-center pl-[7px]">
        <T className="mt-[3px] w-[72px] text-[11.6px] text-[#222]">Data Preview</T>
        <span className="ml-[34px] mt-[2px] h-px w-[591px] bg-[#dadada]" />
      </div>
      <div className="ml-[6px] h-[132px] w-[698px] border border-t-0 border-[#dadada]">
        <div className="flex pl-[8px] pt-[20px]">
          <Preview />
          <span className="ml-[8px] mt-[31px] h-[17px] w-[2px] bg-[#808080]" />
        </div>
        <div className="ml-[25px] mt-[8px] h-[2px] w-[548px] bg-[#858585]" />
      </div>

      <div className="mt-[13px] flex h-[22px] pl-[373px] text-[#7a2346]">
        <div className="flex w-[74px] items-center rounded border border-[#c6c6c6] bg-[#fcfcfc] pl-[21px]">
          <T className="-mt-[3px] text-[8.2px]">Cancel</T>
        </div>
        <div className="relative ml-[10px] flex gap-[10px]">
          <span className="w-[79px] rounded border border-[#c6c6c6] bg-[#fcfcfc]" />
          <span className="w-[74px] rounded border border-[#c6c6c6] bg-[#fcfcfc]" />
          <T className="absolute left-[37px] top-[4px] bg-linear-to-r from-[#fcfcfc] from-44% via-[#f3f3f3] via-55% to-[#fcfcfc] to-70% py-px text-[9.2px]">&lt; Previous Next &gt;</T>
        </div>
        <div className="ml-[10px] w-[74px] rounded border border-[#1279bd] bg-[#fcfcfc] p-[2px]">
          <div className="flex h-full items-center border border-dotted border-black pl-[18px]">
            <T className="-mt-[3px] text-[9.3px]">Finish</T>
          </div>
        </div>
      </div>
    </div>
  )
}

function SheetTabs() {
  return (
    <div className="flex h-[27px] items-start bg-[#e6e6e6]">
      <Icon w={4} h={7} className="ml-[27px] mt-[10px]"><path d="M4 0v7L0 3.500z" fill="#bdbdbd" /></Icon>
      <Icon w={4} h={7} className="ml-[25px] mt-[10px]"><path d="M0 0v7l4-3.500z" fill="#bdbdbd" /></Icon>
      <div className="-mt-px ml-[40px] flex h-[25px] w-[61px] items-center border-x border-b-2 border-x-[#a0a0a0] border-b-[#217346] bg-white pl-[9px] pt-[2px]">
        <T className="text-[10.2px] text-[#27707c]">Sheet1</T>
      </div>
      <Icon w={17} h={17} className="ml-[33px] mt-[5px]">
        <circle cx="8" cy="8" r="7.500" stroke="#777" />
        <path d="M8 4v8M4 8h8" stroke="#666" strokeWidth="1.800" />
      </Icon>
      <div className="ml-[941px] mt-[8px] flex w-[2px] flex-col gap-[2px]">
        <span className="size-[2px] bg-[#aaa]" />
        <span className="size-[2px] bg-[#aaa]" />
        <span className="size-[2px] bg-[#aaa]" />
      </div>
      <div className="ml-[15px] mt-[6px] flex h-[15px] w-[730px] bg-[#f0f0f0]">
        <div className="flex w-[15px] items-center justify-center border border-[#999] bg-white">
          <Icon w={4} h={7}><path d="M4 0v7L0 3.500z" fill="#111" /></Icon>
        </div>
        <div className="w-[669px] border border-[#999] bg-white" />
        <div className="ml-auto flex w-[15px] items-center justify-center border border-[#999] bg-white">
          <Icon w={4} h={7}><path d="M0 0v7l4-3.500z" fill="#111" /></Icon>
        </div>
      </div>
    </div>
  )
}

function StatusBar() {
  return (
    <footer className="flex h-[19px] items-center border-t border-[#c4c4c4] bg-[#f2f2f2] text-[#444]">
      <div className="ml-[8px] flex h-full w-[240px] items-center bg-linear-to-b from-[#f2f2f2] from-75% to-[#858585] pl-[3px] pt-[2px]">
        <T className="text-[10.6px]">Accessibility Ready: Check complete</T>
      </div>
      <div className="ml-[1369px] flex h-full w-10 items-center justify-center bg-[#c6c6c6]">
        <Icon w={13} h={13} className="-ml-px"><path d="M.5.5h12v12H.5zM0 4.500h13M0 8.500h13M4.500 0v13M8.500 0v13" stroke="#666" /></Icon>
      </div>
      <Icon w={14} h={13} className="ml-[13px]"><path d="M.5.5h13v12H.5zM3.500 2.500h7v8h-7zM5 4.500h4M5 6.500h4M5 8.500h4" stroke="#666" /></Icon>
      <Icon w={14} h={13} className="ml-[26px]"><path d="M.5.5h13v12H.5zM4.500.5v7H9M9 .5v7" stroke="#666" /></Icon>
      <span className="ml-[19px] mt-px h-px w-[8px] bg-[#333]" />
      <Icon w={100} h={12} className="ml-[5px] mt-[2px]">
        <path d="M0 5.500h100" stroke="#333" />
        <path d="M48 0h5v11h-5z" fill="#444" />
      </Icon>
      <Icon w={9} h={9} className="ml-[5px]"><path d="M.5 4.500h8M4.500.5v8" stroke="#333" /></Icon>
      <T className="ml-[12px] mt-[3px] text-[9.9px]">100 %</T>
    </footer>
  )
}

export default function App() {
  return (
    <main className="relative h-[1029px] w-[1919px] overflow-hidden bg-[#e6e6e6] font-[Inter,sans-serif]">
      <TitleBar />
      <Ribbon />
      <FormulaBar />
      <div className="flex h-[780px]">
        <Grid />
        <VerticalScroll />
      </div>
      <SheetTabs />
      <StatusBar />
      <Wizard />
    </main>
  )
}
